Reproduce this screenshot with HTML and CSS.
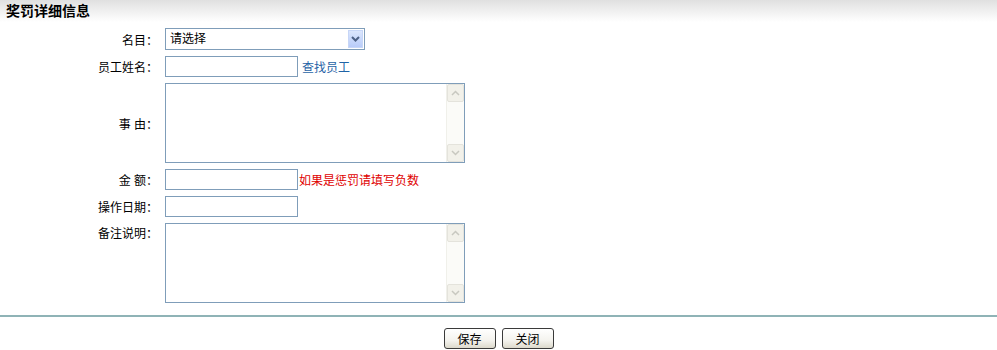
FILE: index.html
```html
<!DOCTYPE html>
<html lang="zh-CN">
<head>
  <meta charset="UTF-8">
  <title>奖罚详细信息</title>
  <link rel="stylesheet" href="styles.css">
</head>
<body>
  <div class="page-title">奖罚详细信息</div>

  <div class="form">
    <label class="form-label">名目：</label>
    <div class="form-field">
      <div class="select-box">
        <select class="select-native">
          <option>请选择</option>
        </select>
        <span class="select-btn">
          <svg width="9" height="6" viewBox="0 0 9 6"><path d="M1 1 L4.5 4.5 L8 1" fill="none" stroke="#4d6185" stroke-width="2"/></svg>
        </span>
      </div>
    </div>

    <label class="form-label">员工姓名：</label>
    <div class="form-field">
      <input type="text" class="text-input">
      <a href="#" class="find-link">查找员工</a>
    </div>

    <label class="form-label">事&nbsp;由：</label>
    <div class="form-field">
      <div class="memo">
        <textarea class="memo-text"></textarea>
        <div class="vscroll">
          <span class="vscroll-btn"><svg width="9" height="6" viewBox="0 0 9 6"><path d="M1 5 L4.5 1.5 L8 5" fill="none" stroke="#c8c8c0" stroke-width="1.5"/></svg></span>
          <span class="vscroll-btn"><svg width="9" height="6" viewBox="0 0 9 6"><path d="M1 1 L4.5 4.5 L8 1" fill="none" stroke="#c8c8c0" stroke-width="1.5"/></svg></span>
        </div>
      </div>
    </div>

    <label class="form-label">金&nbsp;额：</label>
    <div class="form-field">
      <input type="text" class="text-input">
      <span class="hint">如果是惩罚请填写负数</span>
    </div>

    <label class="form-label">操作日期：</label>
    <div class="form-field">
      <input type="text" class="text-input">
    </div>

    <label class="form-label label-top">备注说明：</label>
    <div class="form-field">
      <div class="memo">
        <textarea class="memo-text"></textarea>
        <div class="vscroll">
          <span class="vscroll-btn"><svg width="9" height="6" viewBox="0 0 9 6"><path d="M1 5 L4.5 1.5 L8 5" fill="none" stroke="#c8c8c0" stroke-width="1.5"/></svg></span>
          <span class="vscroll-btn"><svg width="9" height="6" viewBox="0 0 9 6"><path d="M1 1 L4.5 4.5 L8 1" fill="none" stroke="#c8c8c0" stroke-width="1.5"/></svg></span>
        </div>
      </div>
    </div>
  </div>

  <div class="actions">
    <button class="btn">保存</button>
    <button class="btn">关闭</button>
  </div>
</body>
</html>
```

FILE: styles.css
```css
body {
  font-family: "Liberation Sans", "Noto Sans CJK SC", sans-serif;
  font-size: 12px;
  color: #000;
  margin: 0;
  padding: 0;
  background: #fff;
}

.page-title {
  height: 22px;
  line-height: 18px;
  padding: 2px 6px 0;
  box-sizing: border-box;
  font-size: 14px;
  font-weight: bold;
  background: linear-gradient(#e0e0e0, #f6f6f6 70%, #fff);
}

.form {
  display: grid;
  grid-template-columns: 158px auto;
  column-gap: 7px;
  row-gap: 6px;
  align-items: center;
  padding-top: 6px;
  padding-bottom: 12px;
}

.form-label {
  text-align: right;
  white-space: nowrap;
}

.form-label.label-top {
  align-self: start;
  padding-top: 1px;
}

.form-field {
  display: flex;
  align-items: center;
}

.select-box {
  display: flex;
  width: 200px;
  height: 22px;
  box-sizing: border-box;
  border: 1px solid #7f9db9;
  background: #fff;
}

.select-native {
  flex: 1;
  appearance: none;
  border: none;
  outline: none;
  background: transparent;
  font: inherit;
  padding: 0 0 0 4px;
  margin: 0;
  color: #000;
}

.select-btn {
  width: 15px;
  margin: 1px;
  display: flex;
  align-items: center;
  justify-content: center;
  background: linear-gradient(#dbe6fd, #b9ccf9);
  border: 1px solid #c7d6f7;
  box-sizing: border-box;
}

.text-input {
  width: 133px;
  height: 21px;
  box-sizing: border-box;
  border: 1px solid #7f9db9;
  margin: 0;
  padding: 1px 3px;
  font: inherit;
}

.find-link {
  color: #1f63a6;
  text-decoration: none;
  margin-left: 4px;
}

.hint {
  color: #e00000;
  margin-left: 1px;
}

.memo {
  display: flex;
  width: 300px;
  height: 80px;
  box-sizing: border-box;
  border: 1px solid #7f9db9;
  background: #fff;
}

.memo-text {
  flex: 1;
  border: none;
  outline: none;
  resize: none;
  margin: 0;
  padding: 2px;
  font: inherit;
}

.vscroll {
  width: 17px;
  display: flex;
  flex-direction: column;
  justify-content: space-between;
  background: #fbfbf8;
  border-left: 1px solid #f0f0ea;
}

.vscroll-btn {
  height: 16px;
  display: flex;
  align-items: center;
  justify-content: center;
  background: #f2f1ea;
  border: 1px solid #e4e3dc;
  border-radius: 2px;
}

.actions {
  border-top: 2px solid #8fb3b6;
  display: flex;
  justify-content: center;
  gap: 6px;
  padding-top: 11px;
}

.btn {
  width: 52px;
  height: 21px;
  padding: 0;
  font: inherit;
  color: #000;
  border: 1px solid #3a3a3a;
  border-radius: 3px;
  background: linear-gradient(#ffffff, #f4f3ee 60%, #dcd9cc);
  cursor: pointer;
}
```
